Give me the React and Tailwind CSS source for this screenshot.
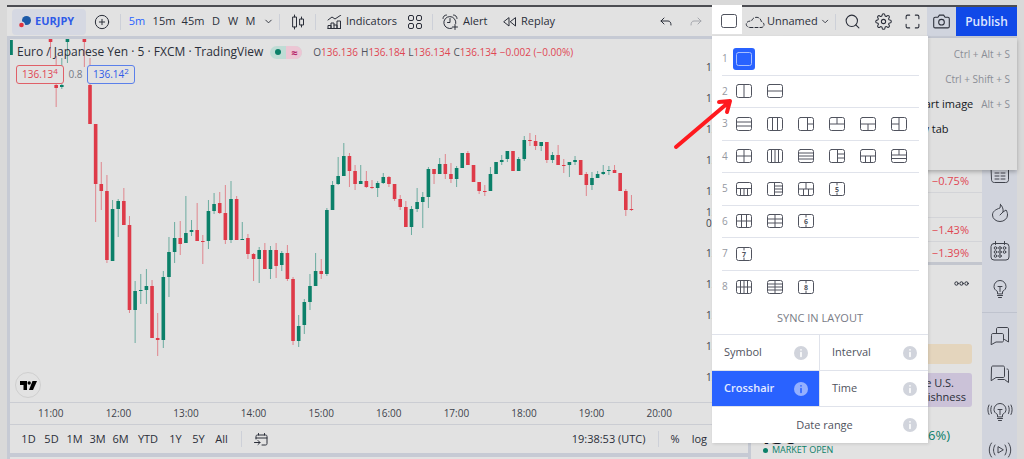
import { useState } from "react";
import clsx from "clsx";
import {
  FiChevronDown,
  FiSearch,
  FiSettings,
  FiMaximize,
  FiCamera,
  FiClock,
  FiList,
  FiPlusCircle,
} from "react-icons/fi";

// slot, kind, high, open/close top, open/close bottom, low
const EARLY = [
  [-14, "g", 40, 40, 55, 55],
  [-7, "r", 39, 39, 42, 58],
  [-6, "r", 56, 85, 88, 107],
  [-5, "g", 58, 85, 87, 89],
  [-4, "g", 39, 39, 42, 63],
  [-1, "r", 39, 39, 42, 67],
];

const SERIES = [
  ["r", 58, 85, 124, 124], ["r", 124, 124, 184, 222], ["r", 162, 184, 191, 210], ["r", 175, 191, 260, 263],
  ["g", 200, 209, 261, 261], ["g", 199, 201, 209, 237], ["r", 188, 201, 225, 225], ["r", 216, 225, 310, 313],
  ["g", 281, 291, 310, 343], ["g", 274, 290, 291, 304], ["g", 269, 286, 290, 304], ["r", 280, 286, 338, 338],
  ["r", 313, 338, 340, 356], ["g", 271, 277, 340, 348], ["g", 237, 252, 277, 297], ["g", 222, 238, 252, 263],
  ["r", 221, 238, 244, 255], ["g", 196, 233, 243, 243], ["g", 220, 230, 232, 236], ["r", 203, 230, 241, 241],
  ["r", 235, 241, 242, 264], ["g", 200, 211, 241, 249], ["g", 193, 204, 211, 214], ["r", 192, 203, 213, 214],
  ["r", 185, 213, 240, 244], ["g", 181, 199, 240, 243], ["r", 196, 199, 240, 240], ["g", 222, 239, 240, 240],
  ["r", 234, 238, 254, 259], ["r", 253, 254, 259, 281], ["g", 247, 250, 259, 283], ["r", 243, 250, 269, 269],
  ["g", 246, 250, 269, 279], ["r", 243, 250, 266, 278], ["g", 251, 253, 265, 271], ["r", 245, 253, 279, 281],
  ["r", 277, 279, 341, 345], ["g", 315, 326, 341, 347], ["g", 299, 302, 325, 334], ["g", 274, 286, 302, 310],
  ["g", 253, 271, 286, 286], ["r", 259, 271, 274, 279], ["g", 208, 210, 274, 276], ["g", 181, 185, 210, 210],
  ["g", 157, 176, 184, 185], ["g", 143, 156, 176, 176], ["r", 153, 156, 171, 187], ["r", 165, 171, 184, 190],
  ["g", 165, 181, 184, 184], ["r", 171, 181, 187, 188], ["r", 180, 187, 188, 189], ["g", 181, 183, 188, 197],
  ["g", 173, 177, 183, 184], ["r", 176, 177, 184, 187], ["r", 184, 184, 199, 201], ["r", 195, 199, 207, 210],
  ["r", 201, 207, 227, 227], ["g", 206, 209, 227, 235], ["g", 188, 202, 209, 212], ["g", 192, 197, 202, 228],
  ["g", 167, 169, 197, 208], ["r", 169, 169, 174, 184], ["g", 158, 164, 174, 174], ["r", 154, 164, 174, 179],
  ["r", 163, 174, 179, 183], ["g", 166, 168, 179, 187], ["g", 153, 153, 168, 168], ["r", 151, 153, 165, 165],
  ["r", 165, 165, 182, 182], ["r", 182, 182, 191, 194], ["r", 185, 191, 192, 196], ["g", 167, 174, 191, 191],
  ["g", 162, 162, 174, 174], ["g", 155, 160, 162, 165], ["g", 151, 151, 159, 162], ["r", 151, 151, 171, 171],
  ["g", 157, 159, 171, 171], ["g", 136, 140, 159, 161], ["r", 133, 140, 141, 146], ["r", 135, 141, 146, 150],
  ["g", 142, 142, 146, 151], ["r", 142, 142, 160, 163], ["g", 152, 155, 160, 163], ["r", 145, 155, 165, 165],
  ["r", 159, 165, 166, 173], ["g", 162, 162, 165, 177], ["g", 156, 160, 162, 165], ["r", 160, 160, 175, 175],
  ["r", 172, 174, 185, 196], ["g", 172, 178, 185, 190], ["g", 171, 174, 178, 178], ["g", 165, 172, 174, 175],
  ["g", 166, 170, 171, 175], ["r", 165, 170, 173, 173], ["r", 173, 173, 191, 191], ["r", 189, 191, 210, 216],
  ["r", 195, 209, 210, 211],
];

const CANDLES = [...EARLY, ...SERIES.map((c, i) => [i, ...c])];

const INTERVALS = [
  ["5m", "w-[26px]"],
  ["15m", "w-[28px]"],
  ["45m", "w-[30px]"],
  ["D", "w-[16px]"],
  ["W", "w-[18px]"],
  ["M", "w-[17px]"],
];

const OHLC = [
  ["O", "136.136"],
  ["H", "136.184"],
  ["L", "136.134"],
  ["C", "136.134"],
];

const HOURS = ["11:00", "12:00", "13:00", "14:00", "15:00", "16:00", "17:00", "18:00", "19:00", "20:00"];
const RANGES = ["1D", "5D", "1M", "3M", "6M", "YTD", "1Y", "5Y", "All"];

// inner lines of each layout, or a number when there are too many variants
const LAYOUTS = [
  [""],
  ["M8 1v12", "M1 7h14"],
  ["M1 5h14M1 9h14", "M5.5 1v12M10.5 1v12", "M9.5 1v12M9.5 7H15", "M1 7h14M8 1v6", "M1 7h14M8 7v6", "M8 1v12M1 7h7"],
  ["M8 1v12M1 7h14", "M4.5 1v12M8 1v12M11.5 1v12", "M1 4h14M1 7h14M1 10h14", "M8.5 1v12M8.5 5H15M8.5 9H15", "M1 7h14M5.5 7v6M10.5 7v6", "M1 6h14M1 9.5h14M8 1v5"],
  ["M1 6.5h14M4.5 6.5V13M8 6.5V13M11.5 6.5V13", "M7.5 1v12M7.5 4H15M7.5 7H15M7.5 10H15", "M1 7h14M8 1v6M5.5 7v6M10.5 7v6", 5],
  ["M1 7h14M5.5 1v12M10.5 1v12", "M8 1v12M1 5h14M1 9h14", 6],
  [7],
  ["M1 7h14M4.5 1v12M8 1v12M11.5 1v12", "M8 1v12M1 4h14M1 7h14M1 10h14", 8],
];

const SYNC = ["Symbol", "Interval", "Crosshair", "Time"];

const MENU = [
  ["Save chart image", "Ctrl + Alt + S"],
  ["Copy chart image", "Ctrl + Shift + S"],
  ["Copy link to the chart image", "Alt + S"],
  ["Open image in new tab", ""],
];

function Svg({ w, h, children, className }) {
  return (
    <svg
      width={w}
      height={h}
      viewBox={`0 0 ${w} ${h}`}
      fill="none"
      stroke="currentColor"
      strokeLinecap="round"
      strokeLinejoin="round"
      className={clsx("shrink-0", className)}
      aria-hidden="true"
    >
      {children}
    </svg>
  );
}

function Divider() {
  return <span className="h-4 w-px shrink-0 bg-[#cdd0d8]" />;
}

function LayoutIcon({ shape }) {
  return (
    <Svg w={16} h={14}>
      <rect x="0.5" y="0.5" width="15" height="13" rx="2" />
      {typeof shape === "number" ? (
        <>
          <path d="M8 1v2M8 11v2" />
          <text x="8" y="9.5" textAnchor="middle" fontSize="7" fontWeight="700" fill="currentColor" stroke="none">
            {shape}
          </text>
        </>
      ) : (
        <path d={shape} strokeLinecap="butt" />
      )}
    </Svg>
  );
}

function InfoDot({ active }) {
  return (
    <Svg w={14} h={14} className={active ? "text-[#94b0ff]" : "text-[#d1d4dc]"}>
      <circle cx="7" cy="7" r="7" fill="currentColor" stroke="none" />
      <path d="M7 6.5v4M7 3.8v.2" stroke={active ? "#2962ff" : "#ffffff"} strokeWidth="1.6" />
    </Svg>
  );
}

function LayoutPopup() {
  const [selected, setSelected] = useState("0-0");
  const [sync, setSync] = useState("Crosshair");

  return (
    <div className="absolute top-[29px] left-0 z-20 w-[216px] bg-white text-[#50535e] shadow-[1px_1px_3px_rgba(0,0,0,0.12)]">
      <div className="grid h-[267px] grid-rows-8 px-[10px] pt-[7px]">
        {LAYOUTS.map((row, r) => (
          <div key={r} className={clsx("flex items-center", r < 7 && "border-b border-[#e0e3eb]")}>
            <span className="w-[11px] text-[10px] text-[#9598a1]">{r + 1}</span>
            {row.map((shape, i) => {
              const id = `${r}-${i}`;
              return (
                <button
                  key={id}
                  aria-label={`Layout ${r + 1}, variant ${i + 1}`}
                  onClick={() => setSelected(id)}
                  className={clsx(
                    "mr-[9px] flex h-[22px] w-[22px] items-center justify-center rounded-[3px]",
                    selected === id ? "bg-[#2962ff] text-[#a9bfff]" : "text-[#50535e]"
                  )}
                >
                  <LayoutIcon shape={shape} />
                </button>
              );
            })}
          </div>
        ))}
      </div>

      <h2 className="flex h-[31px] items-center justify-center text-[11px] text-[#787b86]">SYNC IN LAYOUT</h2>

      <div className="grid grid-cols-2 border-t border-[#e0e3eb] text-[11px] font-medium">
        {SYNC.map((name, i) => (
          <button
            key={name}
            onClick={() => setSync(name)}
            className={clsx(
              "flex h-9 items-center justify-between border-b border-[#e0e3eb] pr-[11px] pl-3",
              i % 2 === 0 && "border-r",
              sync === name && "bg-[#2962ff] font-semibold text-[#e6ecff]"
            )}
          >
            {name}
            <InfoDot active={sync === name} />
          </button>
        ))}
        <button className="col-span-2 flex h-9 items-center justify-end pr-[11px]">
          <span className="flex-1 pl-[34px] text-center">Date range</span>
          <InfoDot />
        </button>
      </div>
    </div>
  );
}

function CameraMenu() {
  return (
    <div className="absolute top-full right-0 z-10 mt-[2px] h-[132px] w-[236px] bg-[#e0e0e0] pt-1 shadow-[0_2px_4px_rgba(0,0,0,0.25)]">
      {MENU.map(([label, keys]) => (
        <button key={label} className="flex h-[25px] w-full items-center justify-between pr-[7px] pl-[49px] text-left">
          <span className="text-[11px] font-medium whitespace-nowrap text-[#131722]">{label}</span>
          <span className="text-[10px] whitespace-nowrap text-[#8b8e96]">{keys}</span>
        </button>
      ))}
    </div>
  );
}

function Toolbar() {
  const [interval, setInterval] = useState("5m");

  return (
    <header className="relative flex h-[29px] shrink-0 items-center bg-[#e2e2e2] text-[11px] font-medium text-[#2a2e39]">
      <button className="ml-[5px] flex h-[26px] w-[74px] items-center gap-1 rounded bg-[#d5d8e2] pl-[7px] text-[11px] font-bold text-[#2f5be8]">
        <Svg w={12} h={12}>
          <circle cx="7.5" cy="4.5" r="4.5" fill="#1c5aa8" stroke="none" />
          <circle cx="2.5" cy="9" r="3.5" fill="#d5d8e2" stroke="none" />
          <circle cx="2.5" cy="9" r="2.3" fill="#e0323f" stroke="none" />
        </Svg>
        EURJPY
      </button>
      <button aria-label="Compare" className="mr-[3px] flex w-[31px] justify-center">
        <FiPlusCircle size={16} strokeWidth={1.5} />
      </button>
      <Divider />
      <div className="ml-[3px] flex">
        {INTERVALS.map(([label, width]) => (
          <button
            key={label}
            onClick={() => setInterval(label)}
            className={clsx("text-center", width, interval === label && "text-[#2962ff]")}
          >
            {label}
          </button>
        ))}
        <button aria-label="More intervals" className="mr-[2px] flex w-[18px] items-center justify-center">
          <FiChevronDown size={11} />
        </button>
      </div>
      <Divider />
      <button aria-label="Candles" className="flex w-[35px] justify-center">
        <Svg w={12} h={16}>
          <path d="M2.5 1v2M2.5 13v2M9.5 3v2M9.5 11v2" />
          <rect x="1" y="3" width="3.5" height="10" />
          <rect x="8" y="5" width="3.5" height="6" />
        </Svg>
      </button>
      <Divider />
      <button className="flex w-[82px] items-center gap-1 pl-[11px]">
        <Svg w={15} h={14}>
          <path d="M1 5l4-3 3 2 6-4M1 13.5v-3h3v3zM4 13.5V8h3v5.5M7 10h3v3.5M10 13.5V6h3.5v7.5zM1 13.5h12" />
        </Svg>
        Indicators
      </button>
      <button aria-label="Templates" className="flex w-[34px] justify-center">
        <Svg w={14} h={14}>
          <rect x="0.5" y="0.5" width="5" height="5" rx="1.5" />
          <rect x="8.5" y="0.5" width="5" height="5" rx="1.5" />
          <rect x="0.5" y="8.5" width="5" height="5" rx="1.5" />
          <rect x="8.5" y="8.5" width="5" height="5" rx="1.5" />
        </Svg>
      </button>
      <Divider />
      <button className="flex w-[61px] items-center gap-1 pl-[9px]">
        <Svg w={17} h={16}>
          <path d="M10 14.2A6 6 0 1 1 13.8 9.5M8 4.5v4H5.5M1 4.5C1 2.5 2.5 1 4.5 1M11.5 1c2 0 3.5 1.5 3.5 3.5M13 10.5v5M10.5 13h5" />
        </Svg>
        Alert
      </button>
      <button className="flex w-[64px] items-center gap-1 pl-[9px]">
        <Svg w={14} h={10}>
          <path d="M6 1v8L1 5zM12.5 1v8l-5-4z" />
        </Svg>
        Replay
      </button>

      <div className="ml-auto flex h-full items-center">
        <button aria-label="Undo" className="flex w-[30px] justify-center">
          <Svg w={12} h={9}>
            <path d="M4 1L1 4l3 3M1 4h7c2 0 3 1.5 3 4" />
          </Svg>
        </button>
        <button aria-label="Redo" className="mr-[1px] flex w-[30px] justify-center text-[#a4a6ac]">
          <Svg w={12} h={9}>
            <path d="M8 1l3 3-3 3M11 4H4C2 4 1 5.5 1 8" />
          </Svg>
        </button>
        <div className="relative h-full w-[30px]">
          <button aria-label="Select layout" className="absolute -top-[2px] z-10 flex h-[29px] w-[30px] items-center justify-center bg-white pt-[3px] pl-[3px]">
            <Svg w={16} h={14} className="text-[#50535e]">
              <rect x="0.5" y="0.5" width="15" height="13" rx="2" />
            </Svg>
          </button>
          <LayoutPopup />
        </div>
        <button className="flex w-[93px] items-center gap-[2px] pr-[5px] pl-[3px] font-medium">
          <Svg w={20} h={14}>
            <path strokeDasharray="3 2" d="M5 12.5h11c4 0 4-5 .5-5.5C16 3.5 13 1.5 10 2.5 8 3 7 4.5 6.5 6 0 5.5-.5 12 5 12.5z" />
          </Svg>
          Unnamed
          <FiChevronDown size={11} className="ml-auto" />
        </button>
        <Divider />
        <button aria-label="Search" className="flex w-[33px] justify-center">
          <FiSearch size={17} strokeWidth={1.5} />
        </button>
        <button aria-label="Settings" className="flex w-[28px] justify-center">
          <FiSettings size={17} strokeWidth={1.5} />
        </button>
        <button aria-label="Fullscreen" className="flex w-[30px] justify-center">
          <FiMaximize size={17} strokeWidth={1.5} />
        </button>
        <button aria-label="Take a snapshot" className="flex h-full w-[29px] items-center justify-center bg-[#d0d4de]">
          <FiCamera size={17} strokeWidth={1.5} />
        </button>
        <button className="h-full w-[61px] bg-[#1049e8] text-[12px] font-semibold text-[#dfe6ff]">Publish</button>
      </div>
      <CameraMenu />
    </header>
  );
}

function Candles() {
  return (
    <svg width="740" height="363" viewBox="10 39 740 363" className="absolute top-0 left-0" role="img" aria-label="EURJPY candles">
      {CANDLES.map(([slot, kind, high, top, bottom, low]) => {
        const x = 90 + slot * 5.64;
        const color = kind === "g" ? "#0b8069" : "#de3a48";
        return (
          <g key={slot} fill={color}>
            <rect x={x - 0.5} y={high} width="1" height={low - high} opacity="0.55" />
            <rect x={x - 1.8} y={top} width="3.6" height={bottom - top} />
          </g>
        );
      })}
    </svg>
  );
}

function ChartPane() {
  return (
    <section className="flex w-[738px] shrink-0 flex-col bg-[#e2e2e2]">
      <div className="relative h-[364px] overflow-hidden border-b border-[#cbcdd3]">
        <Candles />
        <div className="relative flex h-[26px] items-center pl-[7px] text-[#2a2e39]">
          <h1 className="text-[12px] font-medium">Euro / Japanese Yen · 5 · FXCM · TradingView</h1>
          <div className="ml-[7px] flex h-[13px] w-[32px] rounded-full bg-[#bfdcd5] text-[11px] leading-[13px]">
            <span className="flex w-1/2 items-center justify-center">
              <i className="h-[6px] w-[6px] rounded-full bg-[#0b8069]" />
            </span>
            <span className="w-1/2 rounded-r-full bg-[#ecc6d4] text-center font-bold text-[#b5246a]">≈</span>
          </div>
          <p className="ml-[11px] flex gap-[3px] text-[10px] font-medium text-[#e04652]">
            {OHLC.map(([k, v]) => (
              <span key={k}>
                <span className="text-[#50535e]">{k}</span>
                {v}
              </span>
            ))}
            <span>−0.002 (−0.00%)</span>
          </p>
        </div>
        <div className="relative flex items-center pl-[6px] text-[10px] font-medium">
          <button className="h-[19px] w-[48px] rounded-[3px] border border-[#e06068] bg-[#e2e2e2] text-[#e04652]">
            136.13<sup className="text-[8px]">4</sup>
          </button>
          <span className="w-[23px] text-center text-[#787b86]">0.8</span>
          <button className="h-[19px] w-[48px] rounded-[3px] border border-[#5b80ea] bg-[#e2e2e2] text-[#2f5be8]">
            136.14<sup className="text-[8px]">2</sup>
          </button>
        </div>
        {/* price scale, with the bar countdown under the last price */}
        <div className="absolute top-[13px] left-[696px] flex flex-col text-[10px] font-medium text-[#40434c]">
          {[0, 1, 2, 3, 4, 5, 6, 7, 8, 9, 10].map(i =>
            i === 5 ? (
              <span key={i} className="flex h-[31px] flex-col leading-[11px]">
                <span>13</span>
                <span>05</span>
              </span>
            ) : (
              <span key={i} className="h-[31px] leading-[31px]">13</span>
            )
          )}
        </div>
        <div className="absolute bottom-1 left-[5px] flex h-[26px] w-[26px] items-center justify-center rounded-full border border-[#cfcfcf] text-black">
          <Svg w={17} h={9}>
            <g fill="currentColor" stroke="none">
              <path d="M0 0h7v9H3.5V4H0z" />
              <circle cx="9.2" cy="2" r="1.7" />
              <path d="M12.5 0H17l-4 9H9z" />
            </g>
          </Svg>
        </div>
      </div>

      <div className="grid h-[21px] w-[683px] grid-cols-10 items-center pl-[7px] text-center text-[10px] font-medium text-[#40434c]">
        {HOURS.map(h => (
          <span key={h}>{h}</span>
        ))}
      </div>

      <div className="flex h-[29px] items-center border-t border-[#cbcdd3] pl-[7px] text-[11px] font-medium text-[#2a2e39]">
        <div className="mr-[8px] flex">
          {RANGES.map(r => (
            <button key={r} className={r === "YTD" ? "w-8" : "w-[23px]"}>
              {r}
            </button>
          ))}
        </div>
        <Divider />
        <button aria-label="Go to date" className="ml-3">
          <Svg w={14} h={13}>
            <path d="M2 6V3.5C2 2.5 2.5 2 3.5 2h8c1 0 1.5.5 1.5 1.5v7c0 1-.5 1.5-1.5 1.5H8M2 5h11M4.5.5V2M10.5.5V2M.5 9.5H6M4 7.5l2 2-2 2" />
          </Svg>
        </button>
        <span className="ml-auto mr-[12px]">19:38:53 (UTC)</span>
        <Divider />
        <button className="ml-3">%</button>
        <button className="mr-[41px] ml-3">log</button>
      </div>
      <div className="h-[4px] bg-[#c6cad4]" />
      <div className="flex-1" />
    </section>
  );
}

function SidePanel() {
  return (
    <aside className="flex min-w-0 flex-1 flex-col border-l-[3px] border-[#c6cad4] bg-[#e2e2e2]">
      <div className="flex h-[226px] flex-col justify-end border-b-[3px] border-[#c3c6ce] pt-[130px] text-right text-[11px] font-medium text-[#e04652]">
        <p className="h-6 border-b border-[#d3d4d8] pr-[13px] leading-6">−0.75%</p>
        <p className="h-[27px] border-b border-[#d3d4d8]" />
        <p className="h-6 border-b border-[#d3d4d8] pr-[13px] leading-6">−1.43%</p>
        <p className="h-[20px] pr-[13px] leading-[22px]">−1.39%</p>
      </div>
      <button aria-label="More" className="mt-4 mr-[13px] self-end text-[#2a2e39]">
        <Svg w={15} h={5}>
          <circle cx="2.5" cy="2.5" r="1.7" />
          <circle cx="7.5" cy="2.5" r="1.7" />
          <circle cx="12.5" cy="2.5" r="1.7" />
        </Svg>
      </button>
      <div className="mt-[58px] mr-[10px] ml-2 h-[20px] rounded-[3px] bg-[#e4d5bd]" />
      <div className="mt-[9px] mr-[10px] ml-2 flex h-[34px] flex-col justify-center rounded-[3px] bg-[#cbc2d8] pr-[6px] text-right text-[11px] leading-[14px] text-[#2a2e39]">
        <p className="pr-[12px]">in the U.S.</p>
        <p>hawkishness</p>
      </div>
      <div className="mt-[18px] flex items-center justify-between pr-[32px] pl-2">
        <span className="text-[22px] leading-[20px] font-bold text-[#131722]">136</span>
        <span className="text-[13px] leading-[20px] text-[#0b8069]">(0.36%)</span>
      </div>
      <p className="flex items-center gap-1 pl-[12px] text-[9px] leading-[10px] text-[#0b8069]">
        <i className="h-[5px] w-[5px] rounded-full bg-[#0b8069]" />
        MARKET OPEN
      </p>
    </aside>
  );
}

const bulb = "M7.5 14.5v-2C5 11 4 9.5 4 7.5a6 6 0 0 1 12 0c0 2-1 3.5-3.5 5v2zM7.5 16.5h5M8.5 18.5h3M8 7.5h4M10 7.5v5";

function Rail() {
  const item = "flex h-[38px] shrink-0 items-center justify-center";
  return (
    <nav className="flex w-[35px] shrink-0 flex-col bg-[#d1d4dd] pt-[3px] text-[#40434c]">
      <button aria-label="Watchlist" className={item}><FiList size={18} /></button>
      <button aria-label="Alerts" className={item}><FiClock size={18} /></button>
      <button aria-label="Data window" className={item}><FiList size={18} /></button>
      <button aria-label="News" className={item}>
        <Svg w={20} h={20}>
          <path d="M3 4v-2h14v2M1.5 4.5h17v10c0 2-1 3-3 3h-11c-2 0-3-1-3-3zM5 8h4M11 8h4M5 11h4M11 11h4M5 14h4M11 14h4" />
        </Svg>
      </button>
      <button aria-label="Hotlists" className={item}>
        <Svg w={20} h={20}>
          <path d="M10.5 1.5L10 5C5.5 6.5 2.5 8.5 2.5 12a7.5 6.5 0 0 0 15 0c0-2-.5-3.5-1.5-5l-3 2c.5-3-.5-5.5-2.5-7.5zM10 12l3-3" />
        </Svg>
      </button>
      <button aria-label="Calendar" className={item}>
        <Svg w={20} h={20}>
          <rect x="1" y="2.5" width="18" height="16.5" rx="3" />
          <path d="M5.5.5v3M14.5.5v3" />
          {[7, 11, 15].map(y =>
            [5.5, 10, 14.5].slice(0, y === 15 ? 2 : 3).map(x => <circle key={`${x}-${y}`} cx={x} cy={y} r="1.3" />)
          )}
        </Svg>
      </button>
      <button aria-label="Ideas" className={item}>
        <Svg w={20} h={20}><path d={bulb} /></Svg>
      </button>
      <span className="my-1 h-px shrink-0 bg-[#bfc3ce]" />
      <button aria-label="Public chats" className={item}>
        <Svg w={20} h={20}>
          <path d="M1.5 9c0-1 .5-1.5 1.5-1.5h9c1 0 1.5.5 1.5 1.5v5.5c0 1-.5 1.5-1.5 1.5H6l-4.5 2.5zM6.5 7V3c0-1 .5-1.5 1.5-1.5h9c1 0 1.5.5 1.5 1.5v13l-4-2.5" />
        </Svg>
      </button>
      <button aria-label="Private chats" className={item}>
        <Svg w={20} h={20}>
          <path d="M1.5 3.5c0-1 .5-1.5 1.5-1.5h10c1 0 1.5.5 1.5 1.5V12c0 1-.5 1.5-1.5 1.5H6l-4.5 3zM17 5c1 0 1.5.5 1.5 1.5V18.5l-4-3H8" />
        </Svg>
      </button>
      <button aria-label="Ideas stream" className={item}>
        <Svg w={26} h={20}>
          <path transform="translate(3 0)" d={bulb} />
          <path d="M4.5 4c-1 2.5-1 5 0 7.5M2 3c-1.5 3-1.5 6.5 0 9.5M21.5 4c1 2.5 1 5 0 7.5M24 3c1.5 3 1.5 6.5 0 9.5" />
        </Svg>
      </button>
      <button aria-label="Streams" className={item}>
        <Svg w={24} h={16}>
          <path d="M10 5v6l5-3zM7 3c-2 3-2 7 0 10M3.5 1c-3 4-3 10 0 14M17 3c2 3 2 7 0 10M20.5 1c3 4 3 10 0 14" />
        </Svg>
      </button>
    </nav>
  );
}

export default function App() {
  return (
    <div className="relative flex h-screen flex-col overflow-hidden bg-[#d9d9d9] px-[7px] pt-[5px] font-['Open_Sans','Noto_Sans',sans-serif]">
      <div className="h-[2px] shrink-0 bg-[#4c4d52]" />
      <Toolbar />
      <div className="flex min-h-0 flex-1 border-t-[3px] border-l-[3px] border-[#c6cad4]">
        <ChartPane />
        <SidePanel />
        <Rail />
      </div>
      <svg
        width="64"
        height="56"
        viewBox="0 0 64 56"
        className="absolute top-[96px] left-[671px] z-30"
        fill="none"
        stroke="#ff1a1f"
        strokeWidth="4"
        strokeLinecap="round"
        aria-hidden="true"
      >
        <path d="M5 51L58 6M48 6L59 5L56 16" strokeLinejoin="round" />
      </svg>
    </div>
  );
}
